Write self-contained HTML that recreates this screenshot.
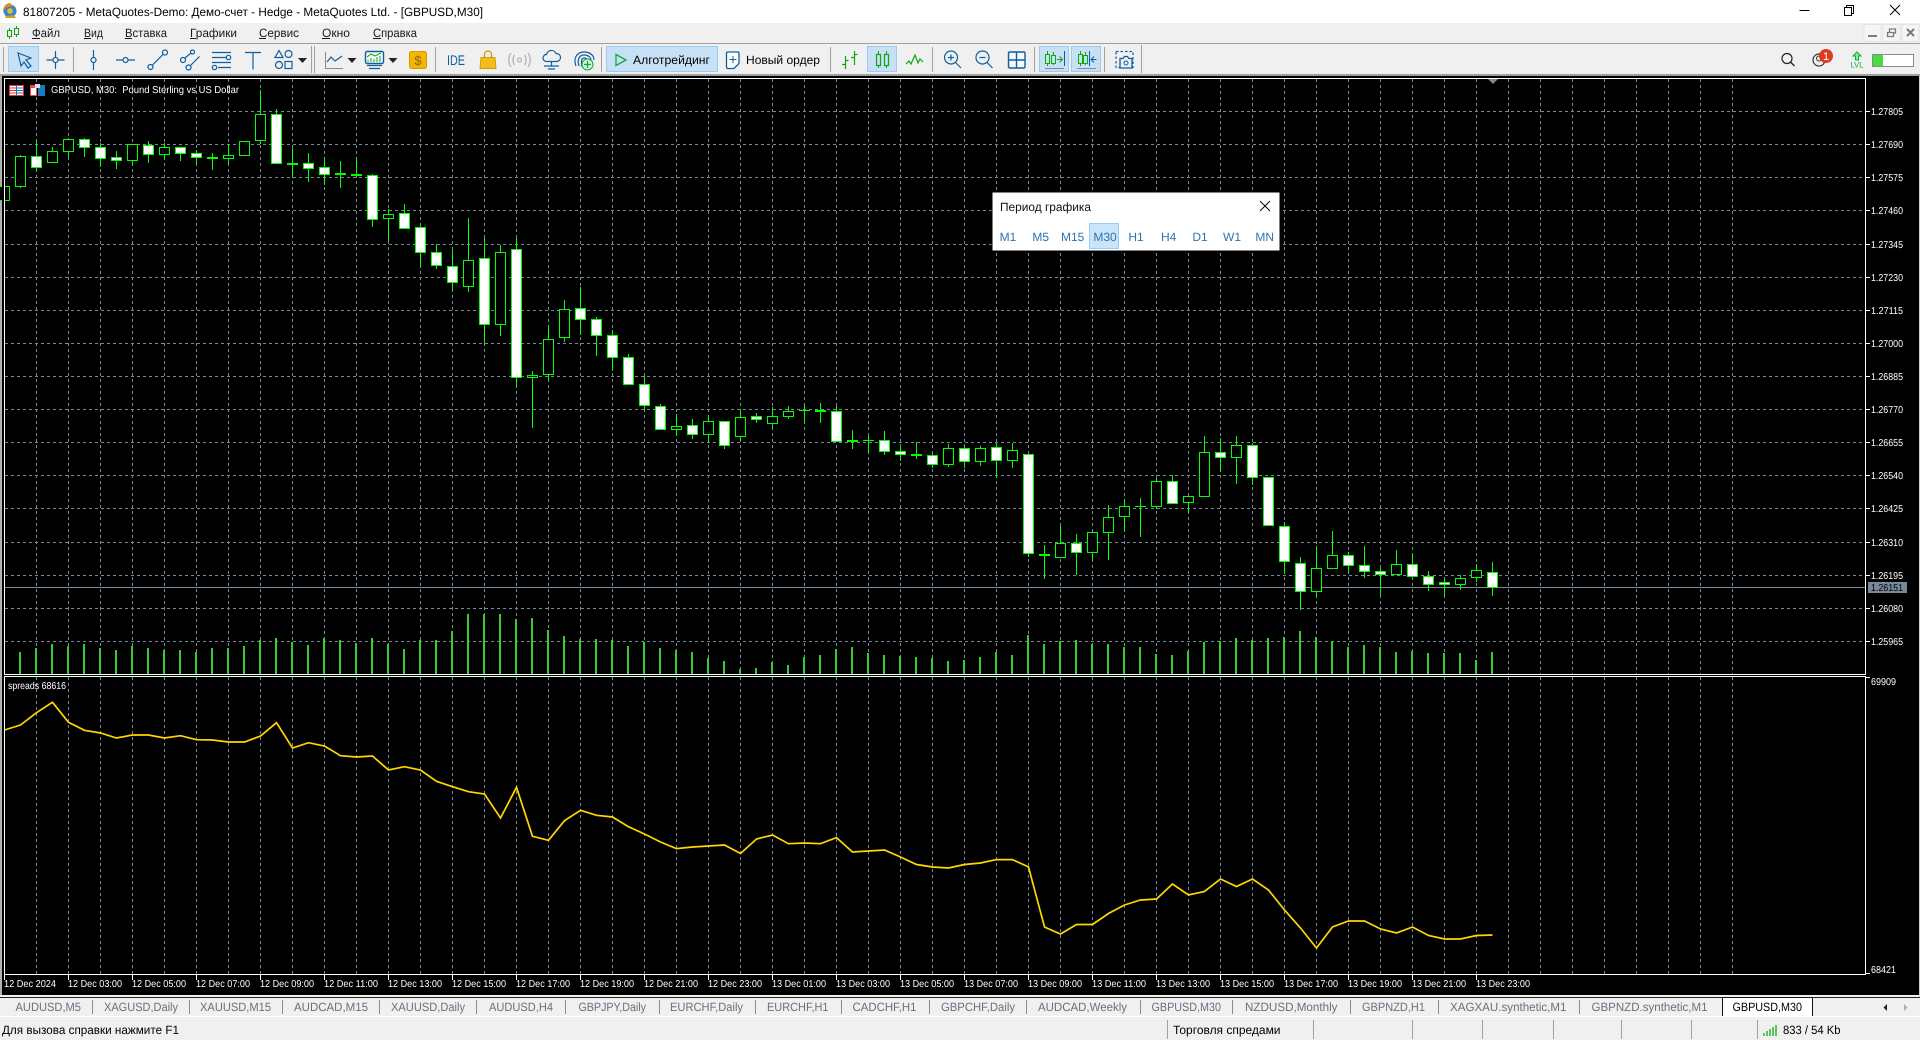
<!DOCTYPE html>
<html><head><meta charset="utf-8"><title>MetaTrader</title>
<style>
html,body{margin:0;padding:0;background:#f0f0f0;overflow:hidden}
svg{display:block;position:absolute;left:0;top:0}
text{font-family:"Liberation Sans","Noto Sans CJK SC",sans-serif;text-rendering:geometricPrecision}
.t{font-size:12px;fill:#000}
.m{font-size:12px;fill:#1a1a1a}
.tab{font-size:12px;fill:#66717f}
.w{font-size:10px;fill:#fff}
.p{font-size:12px;fill:#2a74b0;text-anchor:middle}
.ic{fill:none;stroke:#0f5f9e;stroke-width:1.2}
.gr{fill:none;stroke:#10a810;stroke-width:1.2}
</style></head><body>
<svg width="1920" height="1040" viewBox="0 0 1920 1040" xmlns="http://www.w3.org/2000/svg">
<!-- window chrome -->
<rect width="1920" height="23" fill="#fff"/>
<rect y="23" width="1920" height="20" fill="#f0f0f0"/>
<rect y="43" width="1920" height="1" fill="#a0a0a0"/>
<rect y="44" width="1920" height="30" fill="#f0f0f0"/>
<rect y="74" width="1920" height="2" fill="#a0a0a0"/>
<rect y="76" width="1920" height="919" fill="#000"/>
<rect y="76" width="2" height="919" fill="#b0b0b0"/>
<rect x="1919" y="76" width="1" height="919" fill="#d0d0d0"/>
<!-- title -->
<circle cx="10" cy="11" r="6.5" fill="#3d86c6"/><path d="M3 11c0-4 3-8 7-8l3 3-6 1z" fill="#e58a1c"/><path d="M6 16l8-1 2 3H5z" fill="#c9a227"/><circle cx="10" cy="11" r="2.8" fill="#e8b93a"/>
<text class="t" x="23" y="16" textLength="460" lengthAdjust="spacingAndGlyphs">81807205 - MetaQuotes-Demo: Демо-счет - Hedge - MetaQuotes Ltd. - [GBPUSD,M30]</text>
<path d="M1799.5 10.5h10" stroke="#000" stroke-width="1"/>
<path d="M1844.5 7.5h7v8h-7zM1846.5 7.5v-2h7v8h-2" fill="none" stroke="#000"/>
<path d="M1890 5l10 10M1900 5l-10 10" stroke="#000"/>
<!-- menu -->
<path d="M9.5 28v11M16.5 26v11" stroke="#10a810"/><path d="M7.5 30.5h4v6h-4zM14.5 28.5h4v6h-4z" fill="#f0f0f0" stroke="#10a810"/>
<text class="m" x="32" y="37" textLength="28" lengthAdjust="spacingAndGlyphs">Файл</text>
<text class="m" x="84" y="37" textLength="19" lengthAdjust="spacingAndGlyphs">Вид</text>
<text class="m" x="125" y="37" textLength="42" lengthAdjust="spacingAndGlyphs">Вставка</text>
<text class="m" x="190" y="37" textLength="47" lengthAdjust="spacingAndGlyphs">Графики</text>
<text class="m" x="259" y="37" textLength="40" lengthAdjust="spacingAndGlyphs">Сервис</text>
<text class="m" x="322" y="37" textLength="28" lengthAdjust="spacingAndGlyphs">Окно</text>
<text class="m" x="373" y="37" textLength="44" lengthAdjust="spacingAndGlyphs">Справка</text>
<path d="M32 38.5h8M84 38.5h7M125 38.5h7M190 38.5h6M259 38.5h7M322 38.5h8M373 38.5h8" stroke="#1a1a1a"/>
<!-- MDI buttons -->
<g fill="#f5f5f5" stroke="#e4e4e4"><rect x="1864" y="24.5" width="17" height="17"/><rect x="1883" y="24.5" width="17" height="17"/><rect x="1902" y="24.5" width="17" height="17"/></g>
<path d="M1868 36h9" stroke="#7a7a7a" stroke-width="2"/>
<path d="M1887.5 32.5h6v4h-6zM1889.5 32v-3h6v4h-2" fill="none" stroke="#7a7a7a" stroke-width="1.3"/>
<path d="M1907 29l7 7M1914 29l-7 7" stroke="#7a7a7a" stroke-width="2"/>
<!-- toolbar highlights -->
<g fill="#c6e0f5" stroke="#99ccf0"><rect x="8.5" y="46.5" width="30" height="25"/><rect x="606.5" y="46.5" width="111" height="25"/><rect x="867.5" y="46.5" width="29" height="25"/><rect x="1039.5" y="46.5" width="29" height="25"/><rect x="1071.5" y="46.5" width="29" height="25"/></g>
<!-- separators -->
<path d="M73.5 47v25M311.5 46v27M314.5 46v27M435.5 47v25M601.5 47v25M830.5 47v25M932.5 47v25M1034.5 47v25M1104.5 47v25M1141.5 45v28M3.5 47v25" stroke="#a0a0a0"/>
<!-- drawing tools -->
<path class="ic" d="M18 53l13 5-5 2 5 6-3 2-4-6-3 4z"/>
<g class="ic"><circle cx="55.5" cy="60" r="2.5"/><path d="M46.5 60h6M58.5 60h6M55.5 51v6M55.5 63v6"/>
<circle cx="93.5" cy="60" r="2.5"/><path d="M93.5 50v7M93.5 63v7"/>
<circle cx="125.5" cy="60" r="2.5"/><path d="M116 60h7M128 60h7"/>
<circle cx="150.5" cy="67" r="2.5"/><circle cx="165" cy="52.5" r="2.5"/><path d="M152.5 65l10.5-10.5"/>
<circle cx="183" cy="60" r="2.5"/><circle cx="192.5" cy="52" r="2"/><path d="M185 58l6-5"/><circle cx="188.5" cy="67.5" r="2.5"/><path d="M190.5 65.5l9-9"/>
<path d="M212 52.5h19M212 57.5h14M212 62.5h19M218 67.5h13"/><circle cx="228.5" cy="57.5" r="2.2"/><circle cx="214.5" cy="67.5" r="2.2"/>
<path d="M245 52.5h16M253 52.5v17"/>
<path d="M279 50.5l4 7h-8z"/><circle cx="288.5" cy="54" r="3.5"/><circle cx="279" cy="65" r="3.5"/><rect x="285" y="61.5" width="7" height="7"/></g>
<path d="M298 58h9l-4.500 5z" fill="#222"/>
<path d="M325.5 52v16.5H343" fill="none" stroke="#888"/><path d="M327 62l4-5 4 4 7-5" fill="none" stroke="#0f5f9e" stroke-width="1.2"/>
<path d="M347.5 58h9l-4.500 5z" fill="#222"/>
<rect x="365.5" y="51.5" width="18" height="12" rx="1.5" fill="#f5f9fc" stroke="#0f5f9e" stroke-width="1.4"/><path d="M368 60v2M371 58v4M374 59v3M377 57v5M380 56v6" stroke="#10a810"/><path d="M367 57l4-3 4 2 6-3" fill="none" stroke="#10a810"/><path d="M367 65.5h15M369 68.5h11" stroke="#0f5f9e" stroke-width="1.3"/>
<path d="M388.5 58h9l-4.500 5z" fill="#222"/>
<rect x="409.5" y="51.5" width="17" height="17" rx="2" fill="#f2b705" stroke="#d69a00"/>
<text x="418" y="65" text-anchor="middle" fill="#8f6400" style="font-size:13px">$</text>
<text x="447" y="65" style="font-size:14px;fill:#0f5f9e" textLength="18" lengthAdjust="spacingAndGlyphs">IDE</text>
<path d="M481 57.5h14l1 11h-16z" fill="#f3bb1b" stroke="#d69a00"/><path d="M484.5 58v-3.500c0-4.500 7-4.500 7 0v3.500" fill="none" stroke="#c89500" stroke-width="1.2"/>
<g fill="none" stroke="#b4b4b4" stroke-width="1.3"><circle cx="519.5" cy="60" r="2"/><path d="M514.5 55c-2 3-2 7 0 10M524.5 55c2 3 2 7 0 10M511 53c-3 4-3 10 0 14M528 53c3 4 3 10 0 14"/></g>
<path class="ic" d="M546.500 61.500a3.500 3.500 0 0 1 0-7a5 5 0 0 1 9.500-1a4 4 0 0 1 1 8zM551.500 61.500v4M544 66h15M548 69h7"/>
<g class="ic"><path d="M576 66c-3-8 1-14 8-14s10 4 10 8M579 66c-2-6 0-11 5-11s7 3 7 6M582 67c-1-4-1-9 2-9s4 2 4 5M585 62v6"/></g>
<circle cx="587.5" cy="64.5" r="5.5" fill="#d8f3dd" stroke="#10a840"/><path d="M587.5 61v7M584 64.5h7" stroke="#10a840" stroke-width="1.3"/>
<!-- algo -->
<path d="M616 54.5l10 5.500-10 5.500z" fill="none" stroke="#16a83a" stroke-width="1.3"/>
<text class="t" x="633" y="64" textLength="77" lengthAdjust="spacingAndGlyphs">Алготрейдинг</text>
<path d="M726.5 53.5q0-1.500 1.500-1.500h10q1 0 1 1.500v10l-5 5h-6q-1.500 0-1.500-1.500z" fill="#fff" stroke="#0f5f9e" stroke-width="1.3"/><path d="M733 56v7M729.5 59.5h7" stroke="#0f5f9e"/>
<text class="t" x="746" y="64" textLength="74" lengthAdjust="spacingAndGlyphs">Новый ордер</text>
<!-- chart types -->
<path class="gr" d="M845.5 56v13M842 64.5h3.500M845.5 60.5h3M854.5 51v14M851 57.5h3.500M854.5 54.5h3"/>
<path d="M878.5 51v17M886.5 51v17" stroke="#10a810"/><path d="M876.5 54.5h4v11h-4zM884.5 54.5h4v11h-4z" fill="#c6e0f5" stroke="#10a810" stroke-width="1.2"/>
<path class="gr" d="M906 64l3-3 2 3 4-9 3 8 2-4 3 3"/>
<!-- zoom -->
<g class="ic"><circle cx="951" cy="57.5" r="6.5"/><path d="M955.5 62.5l5.500 5.500M948 57.5h6M951 54.5v6"/><circle cx="982.5" cy="57.5" r="6.5"/><path d="M987 62.5l5.500 5.500M979.5 57.5h6"/></g>
<path d="M1008.5 53.5q0-1.500 1.500-1.500h13.500q1.500 0 1.500 1.500v13q0 1.500-1.500 1.500H1010q-1.500 0-1.500-1.500zM1016.5 52v16M1008.5 60h16" fill="#f5f9fc" stroke="#0f5f9e" stroke-width="1.4"/>
<!-- scroll icons -->
<path d="M1047.5 51v15M1053.5 52v13M1080.5 51v15M1085.5 52v13" stroke="#10a810"/>
<path d="M1045.5 54.5h4v9h-4zM1051.5 55.5h4v8h-4zM1078.5 54.5h4v9h-4zM1083.5 55.5h4v8h-4z" fill="#c6e0f5" stroke="#10a810"/>
<path d="M1057 59.5h5M1059.5 56.5l3 3-3 3" fill="none" stroke="#10a810"/><path d="M1064.5 51v15M1089.5 51v15" stroke="#0f5f9e"/>
<path d="M1091 59.5h5.500M1094 56.5l-3 3 3 3" fill="none" stroke="#0f5f9e"/>
<path d="M1045 68.5h19M1077 68.5h19" stroke="#8a8a8a"/>
<!-- camera -->
<rect x="1116" y="51.5" width="17" height="16" fill="none" stroke="#0f5f9e" stroke-width="1.2" stroke-dasharray="2.500 2"/>
<path d="M1120 58.5h3l1.500-2h3l1.500 2h3v9.500h-12z" fill="#f0f0f0" stroke="#0f5f9e" stroke-width="1.3"/><circle cx="1126" cy="63" r="2" fill="none" stroke="#0f5f9e"/>
<!-- right icons -->
<circle cx="1787" cy="58.5" r="5" fill="none" stroke="#222" stroke-width="1.2"/><path d="M1790.5 62l4 4" stroke="#222" stroke-width="1.3"/>
<circle cx="1819" cy="60" r="6" fill="none" stroke="#333" stroke-width="1.2"/><circle cx="1819" cy="58.5" r="2.5" fill="none" stroke="#333"/>
<circle cx="1826" cy="56" r="7" fill="#e03a22"/>
<text x="1826" y="60" style="font-size:11px;fill:#fff" text-anchor="middle">1</text>
<path d="M1857 52l4 4h-2.500v4h-3v-4H1853z" fill="#8ee89a" stroke="#10b030"/>
<text x="1850.5" y="67.5" style="font-size:8px;fill:#10b030" textLength="13" lengthAdjust="spacingAndGlyphs">LVL</text>
<rect x="1872.5" y="54.5" width="41" height="12" fill="#fff" stroke="#8a8a8a"/><rect x="1873" y="55" width="10" height="11" fill="#44dd44"/>
<!-- chart grid -->
<path d="M5 111.5H1865M5 144.5H1865M5 177.5H1865M5 210.5H1865M5 244.5H1865M5 277.5H1865M5 310.5H1865M5 343.5H1865M5 376.5H1865M5 409.5H1865M5 442.5H1865M5 475.5H1865M5 508.5H1865M5 542.5H1865M5 575.5H1865M5 608.5H1865M5 641.5H1865" stroke="#778899" stroke-dasharray="3 3" fill="none"/>
<path d="M36.5 79v595m32-595v595m32-595v595m32-595v595m32-595v595m32-595v595m32-595v595m32-595v595m32-595v595m32-595v595m32-595v595m32-595v595m32-595v595m32-595v595m32-595v595m32-595v595m32-595v595m32-595v595m32-595v595m32-595v595m32-595v595m32-595v595m32-595v595m32-595v595m32-595v595m32-595v595m32-595v595m32-595v595m32-595v595m32-595v595m32-595v595m32-595v595m32-595v595m32-595v595m32-595v595m32-595v595m32-595v595m32-595v595m32-595v595m32-595v595m32-595v595m32-595v595m32-595v595m32-595v595m32-595v595m32-595v595m32-595v595m32-595v595m32-595v595m32-595v595m32-595v595m32-595v595m32-595v595m32-595v595" stroke="#778899" stroke-dasharray="3 3" fill="none"/>
<path d="M36.5 677v297m32-297v297m32-297v297m32-297v297m32-297v297m32-297v297m32-297v297m32-297v297m32-297v297m32-297v297m32-297v297m32-297v297m32-297v297m32-297v297m32-297v297m32-297v297m32-297v297m32-297v297m32-297v297m32-297v297m32-297v297m32-297v297m32-297v297m32-297v297m32-297v297m32-297v297m32-297v297m32-297v297m32-297v297m32-297v297m32-297v297m32-297v297m32-297v297m32-297v297m32-297v297m32-297v297m32-297v297m32-297v297m32-297v297m32-297v297m32-297v297m32-297v297m32-297v297m32-297v297m32-297v297m32-297v297m32-297v297m32-297v297m32-297v297m32-297v297m32-297v297m32-297v297m32-297v297m32-297v297" stroke="#778899" stroke-dasharray="3 3" fill="none"/>
<path d="M5 587.5H1865" stroke="#778899"/>
<!-- volume -->
<path fill="none" stroke="#32cd32" stroke-width="2" d="M4 660V674M20 652V674M36 648V674M52 644V674M68 646V674M84 644V674M100 648V674M116 650V674M132 646V674M148 648V674M164 650V674M180 650V674M196 652V674M212 648V674M228 648V674M244 646V674M260 640V674M276 638V674M292 642V674M308 645V674M324 638V674M340 640V674M356 643V674M372 638V674M388 644V674M404 649V674M420 640V674M436 640V674M452 631V674M468 614V674M484 614V674M500 614V674M516 619V674M532 618V674M548 630V674M564 636V674M580 639V674M596 639V674M612 640V674M628 646V674M644 642V674M660 648V674M676 650V674M692 652V674M708 658V674M724 661V674M740 669V674M756 668V674M772 662V674M788 665V674M804 657V674M820 655V674M836 649V674M852 647V674M868 653V674M884 655V674M900 656V674M916 657V674M932 658V674M948 661V674M964 660V674M980 657V674M996 652V674M1012 655V674M1028 635V674M1044 644V674M1060 641V674M1076 640V674M1092 644V674M1108 644V674M1124 647V674M1140 647V674M1156 654V674M1172 655V674M1188 651V674M1204 642V674M1220 641V674M1236 638V674M1252 640V674M1268 638V674M1284 637V674M1300 631V674M1316 637V674M1332 641V674M1348 647V674M1364 645V674M1380 647V674M1396 652V674M1412 651V674M1428 653V674M1444 653V674M1460 653V674M1476 660V674M1492 652V674"/>
<!-- wicks -->
<path fill="none" stroke="#0f0" d="M20.5 155V188M36.5 140V171M52.5 147V163M68.5 138V158M84.5 138V157M100.5 143V167M116.5 151V169M132.5 144V166M148.5 141V163M164.5 143V160M180.5 147V161M196.5 150V164M212.5 153V170M228.5 144V164M244.5 141V156M260.5 90V144M276.5 109V164M292.5 148V178M308.5 153V182M324.5 157V185M340.5 161V188M356.5 157V177M372.5 174V227M388.5 209V241M404.5 204V229M420.5 226V267M436.5 244V269M452.5 250V291M468.5 218V292M484.5 238V345M500.5 245V336M516.5 238V387M532.5 371V428M548.5 325V381M564.5 300V342M580.5 287V335M596.5 317V356M612.5 330V371M628.5 354V385M644.5 376V411M660.5 404V430M676.5 414V436M692.5 419V439M708.5 415V442M724.5 421V449M740.5 409V442M756.5 413V423M772.5 407V429M788.5 406V419M804.5 405V423M820.5 403V423M836.5 406V442M852.5 430V449M868.5 436V453M884.5 431V455M900.5 444V461M916.5 442V459M932.5 453V468M948.5 444V467M964.5 444V468M980.5 446V466M996.5 443V478M1012.5 443V468M1028.5 454V557M1044.5 545V579M1060.5 526V558M1076.5 534V575M1092.5 532V561M1108.5 505V560M1124.5 499V532M1140.5 498V537M1156.5 478V509M1172.5 475V504M1188.5 496V513M1204.5 436V497M1220.5 438V472M1236.5 436V484M1252.5 443V485M1268.5 477V526M1284.5 522V574M1300.5 557V610M1316.5 546V598M1332.5 531V569M1348.5 552V574M1364.5 546V578M1380.5 568V595M1396.5 550V575M1412.5 553V577M1428.5 571V591M1444.5 578V596M1460.5 575V590M1476.5 564V582M1492.5 562V596"/>
<!-- hollow bodies -->
<path fill="#000" stroke="#0f0" d="M-.5 186.5h10v14h-10zM15.5 156.5h10v30h-10zM47.5 151.5h10v11h-10zM63.5 139.5h10v12h-10zM127.5 144.5h10v16h-10zM159.5 147.5h10v7h-10zM223.5 155.5h10v3h-10zM239.5 141.5h10v14h-10zM255.5 114.5h10v26h-10zM383.5 214.5h10v4h-10zM463.5 260.5h10v26h-10zM495.5 252.5h10v72h-10zM527.5 375.5h10v2h-10zM543.5 339.5h10v35h-10zM559.5 309.5h10v28h-10zM671.5 426.5h10v3h-10zM703.5 421.5h10v13h-10zM735.5 417.5h10v19h-10zM767.5 416.5h10v7h-10zM783.5 411.5h10v5h-10zM943.5 448.5h10v16h-10zM975.5 448.5h10v13h-10zM1007.5 450.5h10v10h-10zM1055.5 543.5h10v14h-10zM1087.5 532.5h10v20h-10zM1103.5 517.5h10v15h-10zM1119.5 506.5h10v10h-10zM1151.5 481.5h10v25h-10zM1183.5 496.5h10v6h-10zM1199.5 452.5h10v44h-10zM1231.5 445.5h10v12h-10zM1311.5 568.5h10v23h-10zM1327.5 555.5h10v13h-10zM1391.5 564.5h10v10h-10zM1455.5 578.5h10v6h-10zM1471.5 570.5h10v7h-10z"/>
<!-- white bodies -->
<path fill="#fff" stroke="#0f0" d="M31.5 156.5h10v11h-10zM79.5 139.5h10v8h-10zM95.5 147.5h10v11h-10zM111.5 157.5h10v3h-10zM143.5 145.5h10v9h-10zM175.5 147.5h10v6h-10zM191.5 153.5h10v4h-10zM271.5 114.5h10v49h-10zM303.5 163.5h10v5h-10zM319.5 167.5h10v7h-10zM367.5 175.5h10v44h-10zM399.5 213.5h10v15h-10zM415.5 227.5h10v25h-10zM431.5 252.5h10v13h-10zM447.5 266.5h10v16h-10zM479.5 258.5h10v66h-10zM511.5 249.5h10v128h-10zM575.5 308.5h10v11h-10zM591.5 319.5h10v16h-10zM607.5 335.5h10v22h-10zM623.5 357.5h10v27h-10zM639.5 384.5h10v21h-10zM655.5 406.5h10v23h-10zM687.5 425.5h10v9h-10zM719.5 421.5h10v24h-10zM751.5 416.5h10v3h-10zM831.5 411.5h10v30h-10zM879.5 440.5h10v11h-10zM895.5 451.5h10v3h-10zM927.5 455.5h10v9h-10zM959.5 448.5h10v13h-10zM991.5 447.5h10v13h-10zM1023.5 454.5h10v99h-10zM1071.5 543.5h10v9h-10zM1167.5 481.5h10v22h-10zM1215.5 452.5h10v5h-10zM1247.5 445.5h10v32h-10zM1263.5 477.5h10v48h-10zM1279.5 526.5h10v35h-10zM1295.5 563.5h10v28h-10zM1343.5 555.5h10v10h-10zM1359.5 565.5h10v6h-10zM1375.5 571.5h10v3h-10zM1407.5 564.5h10v12h-10zM1423.5 576.5h10v8h-10zM1439.5 582.5h10v2h-10zM1487.5 572.5h10v15h-10z"/>
<!-- doji -->
<path fill="none" stroke="#0f0" stroke-width="2" d="M207 158h11M287 164h11M335 174h11M351 175h11M815 411h11M847 441h11M911 455h11M1039 555h11"/>
<path fill="none" stroke="#0f0" d="M799 410.5h11M863 440.5h11M1135 506.5h11"/>
<!-- chart frame cover -->
<rect x="2" y="76" width="2" height="919" fill="#000"/>
<path d="M4.5 78V674.5M4 78.5H1866M1865.5 78V674.5M4 674.5H1866M4 676.5H1866M4.5 676V974.5M1865.5 676V974.5M4 974.5H1866" stroke="#fff" fill="none"/>
<path d="M1488 79h10l-5 5z" fill="#778899"/>
<!-- spread line -->
<polyline fill="none" stroke="#ffd700" stroke-width="1.7" points="4.5,730 20.5,725 36.5,712.7 52.5,702.3 68.5,722.3 84.5,730.3 100.5,733 116.5,738 132.5,735 148.5,735 164.5,738 180.5,735.7 196.5,739.7 212.5,740 228.5,742 244.5,742 260.5,736 276.5,722.7 292.5,748 308.5,742.7 324.5,746 340.5,755.7 356.5,757 372.5,756 388.5,770 404.5,766.7 420.5,770 436.5,781.3 452.5,786.7 468.5,791.7 484.5,794 500.5,818 516.5,787.3 532.5,836.3 548.5,840.3 564.5,820.7 580.5,810.3 596.5,815.3 612.5,817 628.5,826.7 644.5,834 660.5,842 676.5,848.6 692.5,847 708.5,846 724.5,845 740.5,853.5 756.5,839 772.5,835 788.5,843.7 804.5,843 820.5,843.7 836.5,837.6 852.5,852 868.5,851 884.5,850 900.5,857 916.5,864.5 932.5,867 948.5,868 964.5,864.5 980.5,863 996.5,859.6 1012.5,859.6 1028.5,867 1044.5,927 1060.5,934 1076.5,924.5 1092.5,924.5 1108.5,913.5 1124.5,905 1140.5,900 1156.5,899 1172.5,884 1188.5,895 1204.5,891.4 1220.5,879 1236.5,886.5 1252.5,879 1268.5,890 1284.5,910 1300.5,928 1316.5,948 1332.5,927 1348.5,921 1364.5,921 1380.5,929 1396.5,933 1412.5,927 1428.5,935.5 1444.5,939 1460.5,939 1476.5,935.5 1492.5,935"/>
<!-- chart header -->
<rect x="9.5" y="85.5" width="14" height="10" fill="#fff" stroke="#d33"/><path d="M10 88h6M10 90.5h6M10 93h6" stroke="#d33"/><path d="M16.5 86v9" stroke="#1f6fb0"/><path d="M17 88h6M17 90.5h6M17 93h6" stroke="#1f6fb0"/>
<path d="M30.5 85.5h6v10h-6z" fill="#e44" stroke="#e44"/><path d="M38.5 85.5h6v10h-6z" fill="#1f79c0" stroke="#1f79c0"/><rect x="35" y="84" width="5" height="4" fill="#ddd"/><rect x="31" y="88" width="5" height="7" fill="#fff"/>
<text class="w" x="51" y="93" textLength="188" lengthAdjust="spacingAndGlyphs" xml:space="preserve">GBPUSD, M30:  Pound Sterling vs US Dollar</text>
<text class="w" x="8" y="689" textLength="58" lengthAdjust="spacingAndGlyphs">spreads 68616</text>
<!-- price axis -->
<path d="M1866 111.5h4M1866 144.5h4M1866 177.5h4M1866 210.5h4M1866 244.5h4M1866 277.5h4M1866 310.5h4M1866 343.5h4M1866 376.5h4M1866 409.5h4M1866 442.5h4M1866 475.5h4M1866 508.5h4M1866 542.5h4M1866 575.5h4M1866 608.5h4M1866 641.5h4M1866 677.5h4M1866 973.5h4" stroke="#fff"/>
<g class="w">
<text class="w" x="1871" y="115" textLength="32" lengthAdjust="spacingAndGlyphs">1.27805</text>
<text class="w" x="1871" y="148" textLength="32" lengthAdjust="spacingAndGlyphs">1.27690</text>
<text class="w" x="1871" y="181" textLength="32" lengthAdjust="spacingAndGlyphs">1.27575</text>
<text class="w" x="1871" y="214" textLength="32" lengthAdjust="spacingAndGlyphs">1.27460</text>
<text class="w" x="1871" y="248" textLength="32" lengthAdjust="spacingAndGlyphs">1.27345</text>
<text class="w" x="1871" y="281" textLength="32" lengthAdjust="spacingAndGlyphs">1.27230</text>
<text class="w" x="1871" y="314" textLength="32" lengthAdjust="spacingAndGlyphs">1.27115</text>
<text class="w" x="1871" y="347" textLength="32" lengthAdjust="spacingAndGlyphs">1.27000</text>
<text class="w" x="1871" y="380" textLength="32" lengthAdjust="spacingAndGlyphs">1.26885</text>
<text class="w" x="1871" y="413" textLength="32" lengthAdjust="spacingAndGlyphs">1.26770</text>
<text class="w" x="1871" y="446" textLength="32" lengthAdjust="spacingAndGlyphs">1.26655</text>
<text class="w" x="1871" y="479" textLength="32" lengthAdjust="spacingAndGlyphs">1.26540</text>
<text class="w" x="1871" y="512" textLength="32" lengthAdjust="spacingAndGlyphs">1.26425</text>
<text class="w" x="1871" y="546" textLength="32" lengthAdjust="spacingAndGlyphs">1.26310</text>
<text class="w" x="1871" y="579" textLength="32" lengthAdjust="spacingAndGlyphs">1.26195</text>
<text class="w" x="1871" y="612" textLength="32" lengthAdjust="spacingAndGlyphs">1.26080</text>
<text class="w" x="1871" y="645" textLength="32" lengthAdjust="spacingAndGlyphs">1.25965</text>
<text class="w" x="1871" y="685" textLength="25" lengthAdjust="spacingAndGlyphs">69909</text>
<text class="w" x="1871" y="973" textLength="25" lengthAdjust="spacingAndGlyphs">68421</text>
</g>
<rect x="1868" y="582" width="39" height="11" fill="#778899"/>
<text x="1871" y="591" style="font-size:10px;fill:#000" textLength="32" lengthAdjust="spacingAndGlyphs">1.26151</text>
<!-- time axis -->
<path stroke="#fff" d="M4.5 974v6M68.5 974v6M132.5 974v6M196.5 974v6M260.5 974v6M324.5 974v6M388.5 974v6M452.5 974v6M516.5 974v6M580.5 974v6M644.5 974v6M708.5 974v6M772.5 974v6M836.5 974v6M900.5 974v6M964.5 974v6M1028.5 974v6M1092.5 974v6M1156.5 974v6M1220.5 974v6M1284.5 974v6M1348.5 974v6M1412.5 974v6M1476.5 974v6"/>
<text class="w" x="4" y="987" textLength="52" lengthAdjust="spacingAndGlyphs">12 Dec 2024</text>
<text class="w" x="68" y="987" textLength="54" lengthAdjust="spacingAndGlyphs">12 Dec 03:00</text>
<text class="w" x="132" y="987" textLength="54" lengthAdjust="spacingAndGlyphs">12 Dec 05:00</text>
<text class="w" x="196" y="987" textLength="54" lengthAdjust="spacingAndGlyphs">12 Dec 07:00</text>
<text class="w" x="260" y="987" textLength="54" lengthAdjust="spacingAndGlyphs">12 Dec 09:00</text>
<text class="w" x="324" y="987" textLength="54" lengthAdjust="spacingAndGlyphs">12 Dec 11:00</text>
<text class="w" x="388" y="987" textLength="54" lengthAdjust="spacingAndGlyphs">12 Dec 13:00</text>
<text class="w" x="452" y="987" textLength="54" lengthAdjust="spacingAndGlyphs">12 Dec 15:00</text>
<text class="w" x="516" y="987" textLength="54" lengthAdjust="spacingAndGlyphs">12 Dec 17:00</text>
<text class="w" x="580" y="987" textLength="54" lengthAdjust="spacingAndGlyphs">12 Dec 19:00</text>
<text class="w" x="644" y="987" textLength="54" lengthAdjust="spacingAndGlyphs">12 Dec 21:00</text>
<text class="w" x="708" y="987" textLength="54" lengthAdjust="spacingAndGlyphs">12 Dec 23:00</text>
<text class="w" x="772" y="987" textLength="54" lengthAdjust="spacingAndGlyphs">13 Dec 01:00</text>
<text class="w" x="836" y="987" textLength="54" lengthAdjust="spacingAndGlyphs">13 Dec 03:00</text>
<text class="w" x="900" y="987" textLength="54" lengthAdjust="spacingAndGlyphs">13 Dec 05:00</text>
<text class="w" x="964" y="987" textLength="54" lengthAdjust="spacingAndGlyphs">13 Dec 07:00</text>
<text class="w" x="1028" y="987" textLength="54" lengthAdjust="spacingAndGlyphs">13 Dec 09:00</text>
<text class="w" x="1092" y="987" textLength="54" lengthAdjust="spacingAndGlyphs">13 Dec 11:00</text>
<text class="w" x="1156" y="987" textLength="54" lengthAdjust="spacingAndGlyphs">13 Dec 13:00</text>
<text class="w" x="1220" y="987" textLength="54" lengthAdjust="spacingAndGlyphs">13 Dec 15:00</text>
<text class="w" x="1284" y="987" textLength="54" lengthAdjust="spacingAndGlyphs">13 Dec 17:00</text>
<text class="w" x="1348" y="987" textLength="54" lengthAdjust="spacingAndGlyphs">13 Dec 19:00</text>
<text class="w" x="1412" y="987" textLength="54" lengthAdjust="spacingAndGlyphs">13 Dec 21:00</text>
<text class="w" x="1476" y="987" textLength="54" lengthAdjust="spacingAndGlyphs">13 Dec 23:00</text>
<!-- popup -->
<rect x="992" y="192" width="288" height="59" fill="#fff" stroke="#000" stroke-width="1"/>
<text x="1000" y="211" style="font-size:12px;fill:#111" textLength="91" lengthAdjust="spacingAndGlyphs">Период графика</text>
<path d="M1260 201l10 10M1270 201l-10 10" stroke="#111" stroke-width="1.1"/>
<rect x="1089.5" y="223.5" width="29" height="25" fill="#cce4f7" stroke="#99ccf3"/>
<text class="p" x="1008" y="241">M1</text><text class="p" x="1040.7" y="241">M5</text><text class="p" x="1072.7" y="241">M15</text><text class="p" x="1105" y="241">M30</text><text class="p" x="1136" y="241">H1</text><text class="p" x="1168.7" y="241">H4</text><text class="p" x="1200" y="241">D1</text><text class="p" x="1232" y="241">W1</text><text class="p" x="1264.7" y="241">MN</text>
<!-- tabs -->
<rect y="995" width="1920" height="2" fill="#f0f0f0"/>
<rect y="997" width="1920" height="1" fill="#222"/>
<rect y="998" width="1920" height="18" fill="#f0f0f0"/>
<rect y="1016" width="1920" height="1" fill="#fff"/>
<rect y="1017" width="1920" height="23" fill="#f0f0f0"/>
<path d="M92.5 1000v14M189.5 1000v14M282.5 1000v14M379.5 1000v14M476.5 1000v14M565.5 1000v14M659.5 1000v14M755.5 1000v14M841.5 1000v14M929.5 1000v14M1026.5 1000v14M1140.5 1000v14M1232.5 1000v14M1350.5 1000v14M1438.5 1000v14M1579.5 1000v14" stroke="#8a8a8a"/>
<text class="tab" x="15.5" y="1011" textLength="65.5" lengthAdjust="spacingAndGlyphs">AUDUSD,M5</text>
<text class="tab" x="104" y="1011" textLength="74" lengthAdjust="spacingAndGlyphs">XAGUSD,Daily</text>
<text class="tab" x="200" y="1011" textLength="71" lengthAdjust="spacingAndGlyphs">XAUUSD,M15</text>
<text class="tab" x="294" y="1011" textLength="74" lengthAdjust="spacingAndGlyphs">AUDCAD,M15</text>
<text class="tab" x="391" y="1011" textLength="74" lengthAdjust="spacingAndGlyphs">XAUUSD,Daily</text>
<text class="tab" x="489" y="1011" textLength="64" lengthAdjust="spacingAndGlyphs">AUDUSD,H4</text>
<text class="tab" x="578.5" y="1011" textLength="67.5" lengthAdjust="spacingAndGlyphs">GBPJPY,Daily</text>
<text class="tab" x="670" y="1011" textLength="73" lengthAdjust="spacingAndGlyphs">EURCHF,Daily</text>
<text class="tab" x="767" y="1011" textLength="61.5" lengthAdjust="spacingAndGlyphs">EURCHF,H1</text>
<text class="tab" x="852.5" y="1011" textLength="64" lengthAdjust="spacingAndGlyphs">CADCHF,H1</text>
<text class="tab" x="941" y="1011" textLength="74" lengthAdjust="spacingAndGlyphs">GBPCHF,Daily</text>
<text class="tab" x="1038" y="1011" textLength="89" lengthAdjust="spacingAndGlyphs">AUDCAD,Weekly</text>
<text class="tab" x="1151.5" y="1011" textLength="69.5" lengthAdjust="spacingAndGlyphs">GBPUSD,M30</text>
<text class="tab" x="1245" y="1011" textLength="92.5" lengthAdjust="spacingAndGlyphs">NZDUSD,Monthly</text>
<text class="tab" x="1362" y="1011" textLength="63" lengthAdjust="spacingAndGlyphs">GBPNZD,H1</text>
<text class="tab" x="1450" y="1011" textLength="116.5" lengthAdjust="spacingAndGlyphs">XAGXAU.synthetic,M1</text>
<text class="tab" x="1591.5" y="1011" textLength="116" lengthAdjust="spacingAndGlyphs">GBPNZD.synthetic,M1</text>
<path d="M1722.5 1016V997.5H1812.5V1016" fill="#fff" stroke="#111"/>
<text x="1732.5" y="1011" style="font-size:12px;fill:#000" textLength="69.5" lengthAdjust="spacingAndGlyphs">GBPUSD,M30</text>
<path d="M1887 1004v7l-3.500-3.500z" fill="#222"/><path d="M1904 1004v7l3.500-3.500z" fill="#b0b0b0"/>
<!-- status bar -->
<path d="M1167.5 1020v19M1313.5 1020v19M1412.5 1020v19M1482.5 1020v19M1553.5 1020v19M1621.5 1020v19M1691.5 1020v19M1757.5 1020v19" stroke="#a0a0a0"/>
<text x="2" y="1034" style="font-size:12px;fill:#000" textLength="177" lengthAdjust="spacingAndGlyphs">Для вызова справки нажмите F1</text>
<text x="1173" y="1034" style="font-size:12px;fill:#000" textLength="107.5" lengthAdjust="spacingAndGlyphs">Торговля спредами</text>
<path d="M1764 1033v3M1767 1031v5M1770 1029v7M1773 1027v9M1776 1025v11" stroke="#2bb52b" stroke-width="1.5"/>
<text x="1783" y="1034" style="font-size:12px;fill:#000" textLength="57.5" lengthAdjust="spacingAndGlyphs">833 / 54 Kb</text>
</svg>
</body></html>
